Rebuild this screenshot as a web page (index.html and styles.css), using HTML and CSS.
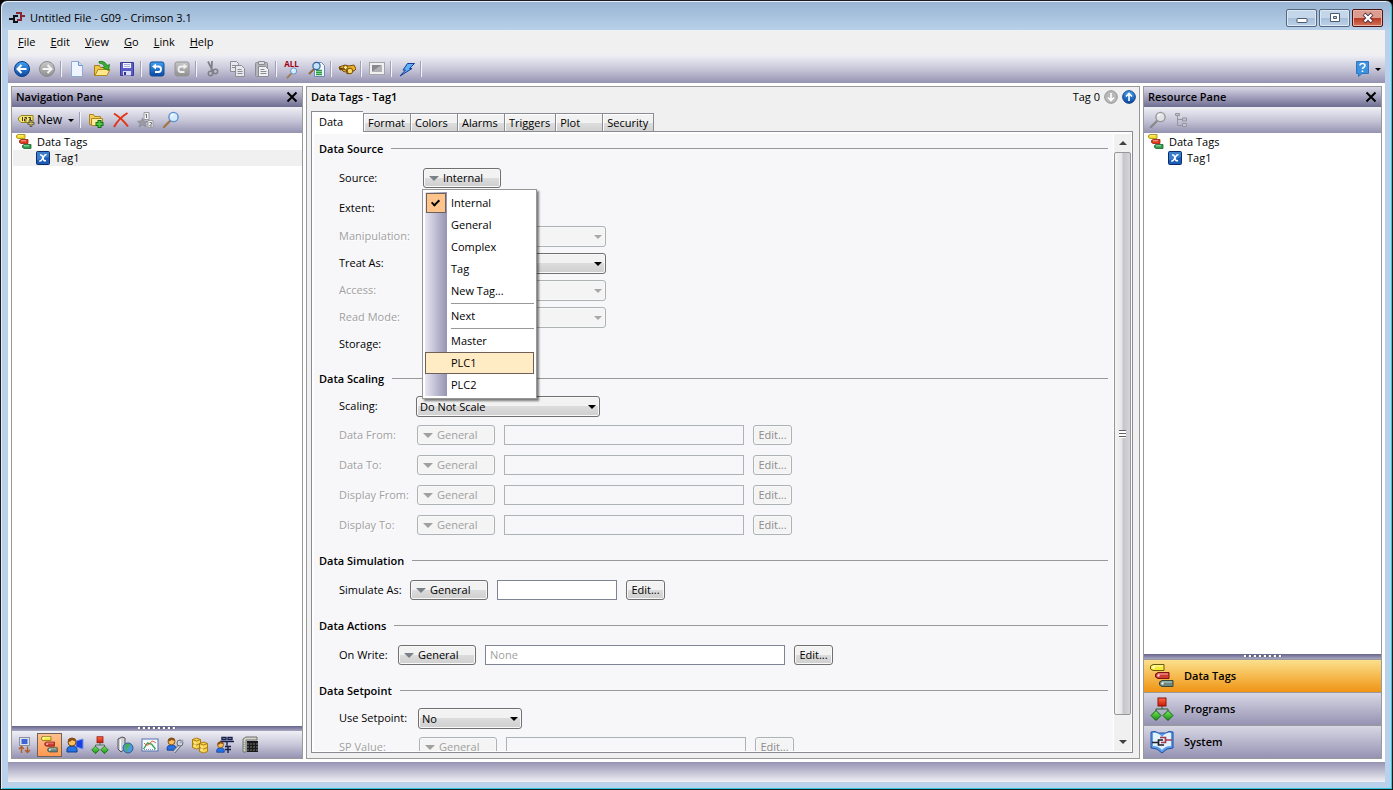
FILE: index.html
```
<!DOCTYPE html>
<html lang="en">
<head>
    <meta charset="UTF-8">
    <meta name="viewport" content="width=device-width, initial-scale=1.0">
    <title>Untitled File - G09 - Crimson 3.1</title>
    <link rel="stylesheet" href="styles.css">
</head>
<body>
    <!-- shared icons -->
    <svg class="sprite" aria-hidden="true">
        <defs>
            <linearGradient id="blue" x1="0" y1="0" x2="0" y2="1"><stop offset="0" stop-color="#3fa2f4"/><stop offset="1" stop-color="#0d47a0"/></linearGradient>
            <linearGradient id="grey" x1="0" y1="0" x2="0" y2="1"><stop offset="0" stop-color="#c9c9c9"/><stop offset="1" stop-color="#8e8e8e"/></linearGradient>
            <linearGradient id="gold" x1="0" y1="0" x2="0" y2="1"><stop offset="0" stop-color="#fff3a0"/><stop offset="1" stop-color="#e0a820"/></linearGradient>
            <linearGradient id="red" x1="0" y1="0" x2="0" y2="1"><stop offset="0" stop-color="#ff6a40"/><stop offset="1" stop-color="#c81808"/></linearGradient>
            <linearGradient id="green" x1="0" y1="0" x2="0" y2="1"><stop offset="0" stop-color="#7ae860"/><stop offset="1" stop-color="#189010"/></linearGradient>
        </defs>
        <symbol id="i-tags" viewBox="0 0 24 24">
            <path d="M3 .500h11v6H3L.500 5V2z" fill="#f4e838" stroke="#6b5c10"/>
            <path d="M3 2h10" stroke="#fffcc8"/>
            <path d="M8 8.500h11v6H8L5.500 13v-3z" fill="#cf3a34" stroke="#7a1510"/>
            <path d="M8 10h10" stroke="#ffa898"/>
            <path d="M12 16.500h11v6H12L9.500 21v-3z" fill="#6c8880" stroke="#34483f"/>
            <path d="M12 18h10" stroke="#c0d4cc"/>
            <path d="M2.500 3.500h2M7.500 11.500h2M11.500 19.500h2" stroke="#fff" stroke-width="2"/>
        </symbol>
        <symbol id="i-tags-small" viewBox="0 0 16 16">
            <path d="M2 .500h7v4H2L.500 3.500v-2z" fill="#f8dc20" stroke="#a08410" stroke-width=".8"/>
            <path d="M5 5.500h7v4H5L3.500 8.500v-2z" fill="#e03a18" stroke="#982010" stroke-width=".8"/>
            <path d="M8 10.500h7v4H8l-1.500-1v-2z" fill="#2ea04c" stroke="#1c6430" stroke-width=".8"/>
            <path d="M2 1.800h5M5 6.800h5M8 11.800h5" stroke="#fff" stroke-opacity=".6"/>
        </symbol>
        <symbol id="i-xtag" viewBox="0 0 14 14">
            <rect x=".500" y=".500" width="13" height="13" rx="1" fill="#1d5cb4" stroke="#0c2c6c"/>
            <path d="M1 1h12v5L1 9z" fill="#5aa0e4" opacity=".5"/>
            <path d="M4 4q2-.5 2.500 1.500l1 3q.500 2 2.500 1M10.500 3.800q-1.500-.6-3 2l-1.200 2.200q-1.500 2.500-3 1.800" fill="none" stroke="#fff" stroke-width="1.500"/>
        </symbol>
        <symbol id="i-programs" viewBox="0 0 24 24">
            <path d="M12 9v3M6 16v-4h12v4" fill="none" stroke="#2c5c38"/>
            <rect x="8" y="1" width="8" height="8" fill="url(#red)" stroke="#8c1408"/>
            <path d="M6 13.500l5 5-5 5-5-5zM18 13.500l5 5-5 5-5-5z" fill="url(#green)" stroke="#0c6410"/>
        </symbol>
        <symbol id="i-search" viewBox="0 0 18 18">
            <path d="M8 10l-6 6" stroke="#a07848" stroke-width="2.400" stroke-linecap="round"/>
            <circle cx="11.500" cy="6" r="4.600" fill="#d4ecff" stroke="#5f8fcc" stroke-width="1.400"/>
            <path d="M9 5.500q.500-2 2.500-2" fill="none" stroke="#fff" stroke-width="1.300"/>
        </symbol>
        <symbol id="i-close" viewBox="0 0 12 12"><path d="M1.500 1.500l9 9M10.500 1.500l-9 9" stroke="#000" stroke-width="2"/></symbol>
        <symbol id="i-person" viewBox="0 0 12 16">
            <path d="M1 15q-1-6 5-6t5 6z" fill="#2472e4" stroke="#103c90"/>
            <circle cx="6" cy="5" r="4" fill="#f8c060" stroke="#784810"/>
            <path d="M2 5q0-4 4-4t4 3q-3 0-4-1-1 2-4 2z" fill="#8a4a14"/>
        </symbol>
    </svg>

    <div class="window">
        <header class="titlebar">
            <svg class="app-icon" width="17" height="14" viewBox="0 0 17 14" fill="none" stroke-width="2">
                <path d="M0 8h5M9 5H5v6h4" stroke="#101010"/>
                <path d="M7 2h5v7H8M12 5h4" stroke="#8c2434"/>
            </svg>
            <h1 class="window-title">Untitled File - G09 - Crimson 3.1</h1>
            <div class="window-buttons">
                <button class="win-btn" aria-label="Minimize"><svg width="12" height="12" viewBox="0 0 12 12"><rect x="1" y="6.500" width="10" height="4" rx=".5" fill="#fff" stroke="#4c5a70"/></svg></button>
                <button class="win-btn" aria-label="Maximize"><svg width="12" height="12" viewBox="0 0 12 12"><path d="M1.500 1.500h9v8h-9zM4.500 4.500v2h3v-2z" fill="#fff" fill-rule="evenodd" stroke="#4c5a70"/></svg></button>
                <button class="win-btn win-close" aria-label="Close"><svg width="12" height="12" viewBox="0 0 12 12"><path d="M2 2l8 8M10 2l-8 8" stroke="#503040" stroke-width="4"/><path d="M2.500 2.500l7 7M9.500 2.500l-7 7" stroke="#fff" stroke-width="2.400"/></svg></button>
            </div>
        </header>

        <div class="client">
            <nav class="menubar">
                <a href="#"><u>F</u>ile</a>
                <a href="#"><u>E</u>dit</a>
                <a href="#"><u>V</u>iew</a>
                <a href="#"><u>G</u>o</a>
                <a href="#"><u>L</u>ink</a>
                <a href="#"><u>H</u>elp</a>
            </nav>

            <div class="toolbar main-toolbar">
                <button class="tool" aria-label="Back"><svg width="18" height="18" viewBox="0 0 18 18"><circle cx="9" cy="9" r="7.500" fill="url(#blue)" stroke="#0c3c84"/><path d="M13.500 9H5M8.500 5L4.500 9l4 4" fill="none" stroke="#fff" stroke-width="2"/></svg></button>
                <button class="tool" aria-label="Forward"><svg width="18" height="18" viewBox="0 0 18 18"><circle cx="9" cy="9" r="7.500" fill="url(#grey)" stroke="#8c8c8c"/><path d="M4.500 9H13M9.500 5l4 4-4 4" fill="none" stroke="#f4f4f4" stroke-width="2"/></svg></button>
                <span class="sep"></span>
                <button class="tool" aria-label="New"><svg width="18" height="18" viewBox="0 0 18 18"><path d="M3.500 1.500h7l4 4v11h-11z" fill="#eef5ff" stroke="#8caad4"/><path d="M10.500 1.500v4h4" fill="#c4dcf8" stroke="#6c94cc"/></svg></button>
                <button class="tool" aria-label="Open"><svg width="18" height="18" viewBox="0 0 18 18"><path d="M1.500 15.500V5.500h5l1 2h6v8z" fill="#f0c848" stroke="#a87c18"/><path d="M2 15.500l3-6h12l-3 6z" fill="#ffe88c" stroke="#b08820"/><path d="M6 1.500q6-1 8 4l2.500-1-1 6L9.500 7.500l2-.8Q10 3 6 3z" fill="#38b030" stroke="#187018" stroke-width=".7"/></svg></button>
                <button class="tool" aria-label="Save"><svg width="18" height="18" viewBox="0 0 18 18"><path d="M2.500 2.500h13v13h-13z" fill="#5a5cc8" stroke="#3c3c98"/><path d="M5 3h8v5H5z" fill="#f4f6ff"/><path d="M6 4.500h6M6 6.500h6" stroke="#a8acdc"/><path d="M5 11h8v4.500H5z" fill="#dcdff4"/><path d="M6 12h2v3H6z" fill="#34348c"/></svg></button>
                <span class="sep"></span>
                <button class="tool" aria-label="Undo"><svg width="18" height="18" viewBox="0 0 18 18"><rect x="2" y="2" width="14" height="14" rx="2" fill="url(#blue)" stroke="#104c98"/><path d="M6 6.500h4.500q2.500 0 2.500 2.700T10.500 12H7" fill="none" stroke="#fff" stroke-width="1.800"/><path d="M8 3.500L4 6.500l4 3z" fill="#fff"/></svg></button>
                <button class="tool" aria-label="Redo"><svg width="18" height="18" viewBox="0 0 18 18"><rect x="2" y="2" width="14" height="14" rx="2" fill="url(#grey)" stroke="#949494"/><path d="M12 6.500H8q-2.500 0-2.500 2.700T8 12h3.500" fill="none" stroke="#f0f0f0" stroke-width="1.800"/><path d="M10.500 3.500l4 3-4 3z" fill="#f0f0f0"/></svg></button>
                <span class="sep"></span>
                <button class="tool" aria-label="Cut"><svg width="18" height="18" viewBox="0 0 18 18" fill="none" stroke="#808088"><path d="M5 1.500l5 10M9 1l-.5 10" stroke-width="1.800"/><circle cx="7.500" cy="13.500" r="2.200" stroke-width="1.500"/><circle cx="12.500" cy="11.500" r="2.200" stroke-width="1.500"/></svg></button>
                <button class="tool" aria-label="Copy"><svg width="18" height="18" viewBox="0 0 18 18" fill="#e8e8ec" stroke="#8c8c94"><path d="M2.500 1.500h6l2 2v8h-8z"/><path d="M4 5.500h4M4 7.500h4"/><path d="M7.500 5.500h6l3 3v8h-9z"/><path d="M9.500 9.500h4M9.500 11.500h5M9.500 13.500h5"/></svg></button>
                <button class="tool" aria-label="Paste"><svg width="18" height="18" viewBox="0 0 18 18" stroke="#8c8c94"><rect x="2.500" y="2.500" width="12" height="14" rx="1" fill="#b4b4ba"/><path d="M5.500 1.500h6v3h-6z" fill="#dedee2"/><path d="M5.500 6.500h7l3 3v7h-10z" fill="#f0f0f2"/><path d="M7.500 9.500h4M7.500 11.500h6M7.500 13.500h6"/></svg></button>
                <span class="sep"></span>
                <button class="tool find-all" aria-label="Find all"><span class="all-text">ALL</span><svg width="12" height="12" viewBox="0 0 18 18"><use href="#i-search"/></svg></button>
                <button class="tool" aria-label="Find in document"><svg width="18" height="18" viewBox="0 0 18 18"><path d="M6.500 2.500h7l3 3v11h-10z" fill="#f0f5ff" stroke="#6c88b8"/><path d="M8 10.500h6M8 12.500h6M8 14.500h6" stroke="#28a038" stroke-width="1.300"/><path d="M6 9l-5 5" stroke="#8c6840" stroke-width="2"/><circle cx="8.500" cy="6" r="3.600" fill="#c4e4fc" stroke="#34649c" stroke-width="1.200"/></svg></button>
                <span class="sep"></span>
                <button class="tool" aria-label="Browse"><svg width="18" height="18" viewBox="0 0 18 18" stroke="#7c5008"><path d="M1 7l6-2 4 1 5-1 2 4-2 2h-3l-2 3-3-1 1-3-3 2z" fill="#ecb028"/><circle cx="12" cy="11" r="2.800" fill="#f8d868"/><circle cx="7.500" cy="7.500" r="2" fill="#fff0a0"/><path d="M1 7l1 3 5-1" fill="#604008"/></svg></button>
                <span class="sep"></span>
                <button class="tool" aria-label="Display"><svg width="18" height="18" viewBox="0 0 18 18"><rect x="1.500" y="2.500" width="15" height="12" fill="#f0f0f0" stroke="#a4a4a8"/><path d="M4 12V5h10z" fill="#888890"/><path d="M4 12h10V5z" fill="#b0b0b4"/></svg></button>
                <span class="sep"></span>
                <button class="tool" aria-label="Download"><svg width="18" height="18" viewBox="0 0 18 18"><path d="M9.500 3.500h7l-5 5h2.500L2 16l5.500-6H5z" fill="#5cb0f8" stroke="#143c98"/></svg></button>
                <span class="sep"></span>
                <button class="tool tool-help" aria-label="Help"><svg width="18" height="18" viewBox="0 0 18 18"><path d="M2.500 1.500h12v12H8l-3.500 3v-3h-2z" fill="#3c92dc" stroke="#2c74c4"/><path d="M6 5.500q0-2 2.500-2t2.500 2q0 1.200-1.500 2-1 .5-1 1.500M8.500 10.500v1.500" fill="none" stroke="#fff" stroke-width="1.600"/></svg><i class="caret"></i></button>
            </div>

            <main class="workspace">
                <section class="pane nav-pane">
                    <div class="pane-head"><h2>Navigation Pane</h2><button class="close" aria-label="Close navigation pane"><svg width="12" height="12"><use href="#i-close"/></svg></button></div>
                    <div class="toolbar pane-toolbar">
                        <button class="tool-new"><svg width="17" height="16" viewBox="0 0 17 16"><path d="M3 3.500h12v7H3L.500 8V6z" fill="#f4e478" stroke="#94801c"/><path d="M4.500 5v4M6.500 5.500h2v1.500h-2v2h2M10.500 5.500h2V9h-2M11 7.200h1.500" fill="none" stroke="#403808"/><path d="M13 8v7M9.500 11.500h7" stroke="#54544c" stroke-width="2.600"/><path d="M13 9v5M10.500 11.500h5" stroke="#d8c850"/></svg>New<i class="caret"></i></button>
                        <span class="sep"></span>
                        <button class="tool" aria-label="New folder"><svg width="18" height="18" viewBox="0 0 18 18"><path d="M2.500 13.500v-10h4l1 2h6v8z" fill="#f4d058" stroke="#b08420"/><path d="M4.500 14.500v-7h11v7z" fill="#ffec9c" stroke="#b08420"/><path d="M12.500 9v8M8.500 13h8" stroke="#186c18" stroke-width="4"/><path d="M12.500 10v6M9.500 13h6" stroke="#4ccc3c" stroke-width="2"/></svg></button>
                        <button class="tool" aria-label="Delete"><svg width="18" height="18" viewBox="0 0 18 18"><path d="M2 2.500q8 5 14 13M15.500 2Q7 7 2 16" fill="none" stroke="#e43414" stroke-width="2"/></svg></button>
                        <button class="tool" aria-label="Sort"><svg width="18" height="18" viewBox="0 0 18 18"><path d="M7 1.500h5v7H7zM11 9.500h5v7h-5z" fill="#f4f4f4" stroke="#9c9ca4"/><path d="M8.500 4l1-1v4M12.500 11.500h2v1.500l-2 2h2.500" fill="none" stroke="#707078"/><path d="M5.500 7l1.500 3 3.500.3L8 12.500l1 3.500-3.500-2L2 16l1-3.500L.500 10.300 4 10z" fill="#9a9aa2" stroke="#84848c" stroke-width=".6"/></svg></button>
                        <button class="tool" aria-label="Find"><svg width="18" height="18"><use href="#i-search"/></svg></button>
                    </div>
                    <ul class="tree">
                        <li><svg width="16" height="16"><use href="#i-tags-small"/></svg>Data Tags</li>
                        <li class="child selected"><svg width="14" height="14"><use href="#i-xtag"/></svg>Tag1</li>
                    </ul>
                    <div class="splitter"></div>
                    <div class="toolbar category-bar">
                        <button class="tool" aria-label="Communications"><svg width="16" height="18" viewBox="0 0 16 18"><rect x="2.500" y="1.500" width="10" height="8" fill="#e0e0e8" stroke="#8890a4"/><rect x="4.500" y="3" width="6" height="5" fill="#3c64d8"/><path d="M4.500 17v-6M2 13l2.500-2.500L7 13M10.500 10.500v6M8 14l2.500 2.500L13 14" fill="none" stroke="#b45c28" stroke-width="1.400"/></svg></button>
                        <button class="tool active" aria-label="Data Tags"><svg width="17" height="17"><use href="#i-tags"/></svg></button>
                        <button class="tool" aria-label="Displays"><svg width="18" height="16" viewBox="0 0 18 16"><path d="M10 4l7-2v10l-7-2z" fill="#1840e0" stroke="#7090f0"/><use href="#i-person" width="12" height="16"/></svg></button>
                        <button class="tool" aria-label="Programs"><svg width="18" height="18"><use href="#i-programs"/></svg></button>
                        <button class="tool" aria-label="Web Server"><svg width="18" height="18" viewBox="0 0 18 18"><path d="M2 3l4-2 3 1v11l-4 3-3-3z" fill="#d0d0d4" stroke="#505058"/><path d="M4.500 3.500V14" stroke="#fff"/><circle cx="12" cy="12" r="5" fill="#4c9cdc" stroke="#285c94"/><path d="M9 10q2-3 5-2l-1 3-2 1 1 4q-3-2-3-6z" fill="#48b048"/></svg></button>
                        <button class="tool" aria-label="Data Logger"><svg width="18" height="16" viewBox="0 0 18 16"><rect x="1" y="2" width="16" height="12" fill="#f4f8ff" stroke="#5474ac"/><path d="M2.500 12l4-6 4 1 4 5" fill="none" stroke="#30a040" stroke-width="1.300"/><path d="M3 6q2 3 4 2t3-3 5 1" fill="none" stroke="#e06040"/><path d="M3 12.500h12" stroke="#8098c0" stroke-dasharray="1 1"/></svg></button>
                        <button class="tool" aria-label="Security"><svg width="18" height="16" viewBox="0 0 18 16"><use href="#i-person" width="11" height="14"/><path d="M8 15l6-7" stroke="#606874" stroke-width="3.400"/><path d="M8 15l6-7" stroke="#c8d0dc" stroke-width="1.800"/><circle cx="14" cy="6" r="3" fill="#d0d8e4" stroke="#606874"/><path d="M14 6l3-3" stroke="#a8a6c0" stroke-width="2"/></svg></button>
                        <button class="tool" aria-label="SQL"><svg width="18" height="18" viewBox="0 0 18 18" fill="#f8d450" stroke="#a87c14"><path d="M1.500 3.500v8q4 3 8 0v-8q-4-3-8 0z"/><path d="M1.500 3.500q4 3 8 0M1.500 7.500q4 3 8 0" fill="none"/><path d="M8.500 7.500v8q4 3 8 0v-8q-4-3-8 0z"/><path d="M8.500 7.500q4 3 8 0M8.500 11.500q4 3 8 0" fill="none"/><path d="M4 6v5M11 10v5" stroke="#fff8c0"/></svg></button>
                        <button class="tool" aria-label="Control"><svg width="18" height="18" viewBox="0 0 18 18"><path d="M6 1.500h4v2H6zM12 1.500h4v2h-4zM4 5.500h14M11 5.500v4M9 10.500h6M9 13.500h6M12 10v7" fill="none" stroke="#14204c" stroke-width="1.400"/><use href="#i-person" x="0" y="5" width="9" height="12"/></svg></button>
                        <button class="tool" aria-label="Devices"><svg width="18" height="18" viewBox="0 0 18 18"><path d="M2 3l3-2h11v3H5v12H2z" fill="#d4d4cc" stroke="#707068"/><path d="M6 5h11v11H6z" fill="#181818"/><path d="M6 8h11M6 11h11M6 14h11" stroke="#7c7c7c" stroke-dasharray="2 1"/><path d="M3 6v8" stroke="#5c8c5c" stroke-dasharray="1 1"/></svg></button>
                    </div>
                </section>

                <section class="pane editor">
                    <div class="editor-head">
                        <h2>Data Tags - Tag1</h2>
                        <span class="tag-index">Tag 0</span>
                        <button class="step" aria-label="Next tag"><svg width="14" height="14" viewBox="0 0 14 14"><circle cx="7" cy="7" r="6.300" fill="#b8b8b8" stroke="#949494"/><path d="M7 3v7M4 7.500l3 3 3-3" fill="none" stroke="#fff" stroke-width="1.600"/></svg></button>
                        <button class="step" aria-label="Previous tag"><svg width="14" height="14" viewBox="0 0 14 14"><circle cx="7" cy="7" r="6.300" fill="url(#blue)" stroke="#0c3c84"/><path d="M7 11V4M4 6.500l3-3 3 3" fill="none" stroke="#fff" stroke-width="1.600"/></svg></button>
                    </div>
                    <div class="tabs">
                        <button class="tab current">Data</button>
                        <button class="tab">Format</button>
                        <button class="tab">Colors</button>
                        <button class="tab">Alarms</button>
                        <button class="tab">Triggers</button>
                        <button class="tab">Plot</button>
                        <button class="tab">Security</button>
                    </div>
                    <div class="sheet">
                        <form class="fields">
                            <fieldset class="group source">
                                <h3>Data Source</h3>
                                <div class="row tall">
                                    <label for="source">Source:</label>
                                    <div class="menu-anchor">
                                        <button type="button" class="picker" id="source"><i class="tri"></i>Internal</button>
                                        <ul class="menu">
                                            <li class="checked">Internal</li>
                                            <li>General</li>
                                            <li>Complex</li>
                                            <li>Tag</li>
                                            <li>New Tag...</li>
                                            <li class="divider"></li>
                                            <li>Next</li>
                                            <li class="divider"></li>
                                            <li>Master</li>
                                            <li class="hover">PLC1</li>
                                            <li>PLC2</li>
                                        </ul>
                                    </div>
                                </div>
                                <div class="row tall"><span class="label">Extent:</span></div>
                                <div class="row off"><label for="manip">Manipulation:</label><span class="select"><select id="manip" disabled><option></option></select></span></div>
                                <div class="row"><label for="treat">Treat As:</label><span class="select"><select id="treat"><option></option></select></span></div>
                                <div class="row off"><label for="access">Access:</label><span class="select"><select id="access" disabled><option></option></select></span></div>
                                <div class="row off"><label for="read">Read Mode:</label><span class="select"><select id="read" disabled><option></option></select></span></div>
                                <div class="row"><span class="label">Storage:</span></div>
                            </fieldset>

                            <fieldset class="group scaling">
                                <h3>Data Scaling</h3>
                                <div class="row"><label for="scale">Scaling:</label><span class="select"><select id="scale"><option>Do Not Scale</option></select></span></div>
                                <div class="row tall off"><label for="data-from">Data From:</label><button type="button" class="picker" disabled><i class="tri"></i>General</button><input type="text" id="data-from" class="box" disabled><button type="button" class="edit" disabled>Edit...</button></div>
                                <div class="row tall off"><label for="data-to">Data To:</label><button type="button" class="picker" disabled><i class="tri"></i>General</button><input type="text" id="data-to" class="box" disabled><button type="button" class="edit" disabled>Edit...</button></div>
                                <div class="row tall off"><label for="disp-from">Display From:</label><button type="button" class="picker" disabled><i class="tri"></i>General</button><input type="text" id="disp-from" class="box" disabled><button type="button" class="edit" disabled>Edit...</button></div>
                                <div class="row tall off"><label for="disp-to">Display To:</label><button type="button" class="picker" disabled><i class="tri"></i>General</button><input type="text" id="disp-to" class="box" disabled><button type="button" class="edit" disabled>Edit...</button></div>
                            </fieldset>

                            <fieldset class="group simulation">
                                <h3>Data Simulation</h3>
                                <div class="row tall"><label for="simulate">Simulate As:</label><button type="button" class="picker"><i class="tri"></i>General</button><input type="text" id="simulate" class="box short"><button type="button" class="edit">Edit...</button></div>
                            </fieldset>

                            <fieldset class="group actions">
                                <h3>Data Actions</h3>
                                <div class="row tall"><label for="on-write">On Write:</label><button type="button" class="picker"><i class="tri"></i>General</button><input type="text" id="on-write" class="box long" placeholder="None"><button type="button" class="edit">Edit...</button></div>
                            </fieldset>

                            <fieldset class="group setpoint">
                                <h3>Data Setpoint</h3>
                                <div class="row"><label for="use-sp">Use Setpoint:</label><span class="select narrow"><select id="use-sp"><option>No</option></select></span></div>
                                <div class="row tall off"><label for="sp-value">SP Value:</label><button type="button" class="picker" disabled><i class="tri"></i>General</button><input type="text" id="sp-value" class="box" disabled><button type="button" class="edit" disabled>Edit...</button></div>
                            </fieldset>
                        </form>
                        <div class="scrollbar">
                            <button class="scroll-btn up" aria-label="Scroll up"></button>
                            <div class="thumb"><span class="grip"></span></div>
                            <button class="scroll-btn down" aria-label="Scroll down"></button>
                        </div>
                    </div>
                </section>

                <section class="pane resource-pane">
                    <div class="pane-head"><h2>Resource Pane</h2><button class="close" aria-label="Close resource pane"><svg width="12" height="12"><use href="#i-close"/></svg></button></div>
                    <div class="toolbar pane-toolbar">
                        <button class="tool" aria-label="Find" disabled><svg class="greyed" width="18" height="18"><use href="#i-search"/></svg></button>
                        <button class="tool" aria-label="Expand" disabled><svg width="18" height="16" viewBox="0 0 18 16" fill="#c4c4cc" stroke="#94949c"><path d="M3.500 3v10.500H8M3.500 7.500H8" fill="none"/><path d="M1.500 1.500h4v2h-4zM8.500 6h4v3h-4zM8.500 11.500h4v3h-4z"/></svg></button>
                    </div>
                    <ul class="tree">
                        <li><svg width="16" height="16"><use href="#i-tags-small"/></svg>Data Tags</li>
                        <li class="child"><svg width="14" height="14"><use href="#i-xtag"/></svg>Tag1</li>
                    </ul>
                    <div class="splitter"></div>
                    <button class="category active"><svg width="24" height="24"><use href="#i-tags"/></svg>Data Tags</button>
                    <button class="category"><svg width="24" height="24"><use href="#i-programs"/></svg>Programs</button>
                    <button class="category"><svg width="24" height="24" viewBox="0 0 24 24"><path d="M1 2q5-1.500 7 1h8q2-2.500 7-1v16l-6 1-5 4-5-4-6-1z" fill="#5c9ce8" stroke="#1c4ca8"/><path d="M3 3q5-1 9 4 4-5 9-4v13q-6 0-9 4-3-4-9-4z" fill="#e4f1ff"/><path d="M2 12.500h6M13 10H8.500v5H14" fill="none" stroke="#202028" stroke-width="1.700"/><path d="M10 7.500h5.500v5H11M15.500 10H22" fill="none" stroke="#a83848" stroke-width="1.700"/></svg>System</button>
                </section>
            </main>

            <footer class="statusbar"></footer>
        </div>
    </div>
</body>
</html>
```
FILE: styles.css
```
*, *::before, *::after {
    box-sizing: border-box;
}

body {
    margin: 0;
    background: #000;
    color: #000;
    font-family: "Open Sans", "Noto Sans", sans-serif;
    font-size: 11px;
    line-height: 16px;
}

button, input, select {
    font: inherit;
    color: inherit;
    margin: 0;
    padding: 0;
}

button {
    border: 0;
    background: none;
}

h1, h2, h3, ul, fieldset {
    margin: 0;
    padding: 0;
    border: 0;
    font-size: 11px;
}

h2, h3 {
    font-weight: 600;
}

ul {
    list-style: none;
}

svg {
    display: block;
    flex: none;
}

.sprite {
    position: absolute;
    width: 0;
    height: 0;
}

/* window frame */
.window {
    display: flex;
    flex-direction: column;
    height: 100vh;
    padding: 0 6px 7px;
    border: 1px solid #1c1c1c;
    border-radius: 7px 7px 0 0;
    background: linear-gradient(#98b4d2, #b9d1ea 30px);
    box-shadow: inset 1px 1px #e4eefa, inset -1px -1px #2cc8e0;
}

.titlebar {
    display: flex;
    flex: none;
    align-items: center;
    height: 29px;
    padding: 5px 3px 0 2px;
}

.window-title {
    margin-left: 4px;
    font-size: 11px;
    font-weight: normal;
}

.window-buttons {
    display: flex;
    gap: 2px;
    margin-left: auto;
}

.win-btn {
    display: flex;
    align-items: center;
    justify-content: center;
    width: 31px;
    height: 18px;
    border: 1px solid #56687e;
    border-radius: 2px;
    background: linear-gradient(#c4d6ea 50%, #a6bed8 50%, #bcd2ea);
    box-shadow: inset 0 0 0 1px #dce8f4;
}

.win-close {
    border-color: #4c1414;
    background: linear-gradient(#dc9c90 50%, #b83820 50%, #d4745c);
    box-shadow: inset 0 0 0 1px #e8b4a8;
}

.client {
    display: flex;
    flex: 1;
    flex-direction: column;
    min-height: 0;
    margin: 0 1px;
    background: #fff;
}

.menubar {
    display: flex;
    flex: none;
    align-items: center;
    gap: 15px;
    height: 25px;
    padding: 0 10px 1px;
    background: #f0f0f0;
}

.menubar a {
    color: #000;
    text-decoration: none;
}

/* toolbars */
.toolbar {
    display: flex;
    flex: none;
    align-items: center;
    background: linear-gradient(#efeff5, #c8c7d9 50%, #9593b2);
}

.main-toolbar {
    height: 28px;
    padding: 0 5px 0 1px;
}

.tool {
    display: flex;
    align-items: center;
    justify-content: center;
    width: 25px;
    height: 24px;
}

.sep {
    width: 1px;
    height: 16px;
    margin: 0 2px;
    background: #f4f4f8;
    box-shadow: -1px 0 #a09eb8;
}

.caret {
    width: 0;
    border: 3px solid transparent;
    border-top-color: #000;
    border-bottom: 0;
}

.find-all {
    flex-direction: column;
}

.all-text {
    color: #a00010;
    font-size: 8px;
    font-weight: bold;
    line-height: 7px;
}

.tool-help {
    gap: 3px;
    margin-left: auto;
}

/* panes */
.workspace {
    display: flex;
    flex: 1;
    gap: 3px;
    min-height: 0;
    padding: 3px;
}

.pane {
    display: flex;
    flex-direction: column;
    min-height: 0;
    border: 1px solid #999;
    background: #fff;
}

.nav-pane {
    width: 292px;
}

.resource-pane {
    width: 239px;
}

.pane-head {
    display: flex;
    align-items: center;
    justify-content: space-between;
    height: 20px;
    padding: 0 4px;
    background: linear-gradient(#d8d7e6, #a3a1bd 50%, #6f6d90);
}

.pane-toolbar {
    height: 26px;
    padding-left: 1px;
}

.tool-new {
    display: flex;
    align-items: center;
    width: 65px;
    padding-left: 5px;
    gap: 2px;
    font-size: 12px;
}

.tool-new .caret {
    margin-left: 4px;
}

.greyed {
    filter: grayscale(1);
    opacity: .8;
}

.tree {
    flex: 1;
    padding: 1px 0 0 1px;
}

.tree li {
    display: flex;
    align-items: center;
    gap: 5px;
    height: 16px;
    padding-left: 3px;
}

.tree .child {
    padding-left: 23px;
}

.tree .selected {
    background: #f0f0f0;
}

.splitter {
    display: flex;
    flex: none;
    justify-content: center;
    height: 5px;
    background: linear-gradient(#66648a, #a8a6c2);
}

.splitter::before {
    content: "";
    width: 38px;
    height: 2px;
    margin-top: 1px;
    background: repeating-linear-gradient(90deg, #fff 0 2px, #66667c 2px 4px, transparent 4px 5px);
}

.category-bar {
    height: 27px;
}

.category-bar .active {
    border: 1px solid #6c6058;
    background: linear-gradient(#ffc090, #ff9850);
}

.category {
    display: flex;
    align-items: center;
    gap: 10px;
    height: 33px;
    padding-left: 6px;
    border-top: 1px solid #999;
    background: linear-gradient(#d8d7e5, #9593b2);
    font-weight: 600;
}

.category.active {
    background: linear-gradient(#fbe08c, #f09414);
}

/* editor */
.editor {
    flex: 1;
    min-width: 0;
    padding: 0 6px 5px 4px;
    background: #f0f0f0;
}

.editor-head {
    display: flex;
    flex: none;
    align-items: center;
    gap: 4px;
    height: 20px;
    margin-right: -3px;
}

.tag-index {
    margin-left: auto;
}

.tabs {
    display: flex;
    flex: none;
    align-items: flex-end;
    height: 24px;
    padding-top: 4px;
}

.tab {
    min-width: 47px;
    height: 18px;
    padding: 0 5px 0 4px;
    border: 1px solid #898c95;
    border-width: 1px 0 0 1px;
    background: linear-gradient(#f2f2f2 50%, #dedede 50%, #d2d2d2);
    box-shadow: inset 1px 1px #fff;
    text-align: left;
}

.tab:last-child {
    border-right-width: 1px;
}

.tab.current {
    position: relative;
    z-index: 1;
    width: 52px;
    height: 21px;
    margin-bottom: -1px;
    padding: 0 7px;
    background: #fff;
}

.sheet {
    display: flex;
    flex: 1;
    min-height: 0;
    padding: 2px 1px 1px 2px;
    border: 1px solid #898c95;
    background: #fff;
}

.fields {
    flex: 1;
    min-width: 0;
    overflow: hidden;
    padding: 0 5px;
    background: #f7f7fa;
}

.group {
    margin-bottom: 6px;
}

.group h3 {
    display: flex;
    align-items: center;
    gap: 8px;
    height: 29px;
}

.group h3::after {
    content: "";
    flex: 1;
    height: 1px;
    background: #999;
}

.row {
    display: flex;
    align-items: center;
    height: 27px;
    padding-left: 20px;
}

.row.tall {
    height: 30px;
}

.row label, .label {
    flex: none;
    padding-bottom: 1px;
    white-space: nowrap;
}

.tall label, .tall .label {
    padding-bottom: 0;
}

.source label { width: 83px; }
.scaling label { width: 77px; }
.simulation label { width: 70px; }
.actions label { width: 58px; }
.setpoint label { width: 79px; }

.off label {
    color: #a0a0a0;
    text-shadow: 1px 1px #fff;
}

.picker, .edit, .select select {
    border: 1px solid #707070;
    border-radius: 3px;
    background: linear-gradient(#f2f2f2 50%, #dcdcdc 50%, #cfcfcf);
    box-shadow: inset 0 0 0 1px #f8f8f8;
}

.picker {
    display: flex;
    align-items: center;
    gap: 4px;
    width: 78px;
    height: 20px;
    margin-left: 1px;
    padding-left: 5px;
}

.tri {
    border: 5px solid transparent;
    border-top-color: #7c8088;
    border-bottom: 0;
}

.edit {
    width: 39px;
    height: 20px;
}

.picker:disabled, .edit:disabled, .select select:disabled {
    border-color: #adb2b5;
    background: #f4f4f4;
    color: #8c8c8c;
}

.picker:disabled {
    color: #a0a0a0;
}

.picker:disabled .tri {
    border-top-color: #a0a0a0;
}

.box {
    width: 240px;
    height: 20px;
    margin: 0 9px;
    padding: 0 4px 2px;
    border: 1px solid #7f8494;
    background: #fff;
}

.box.short { width: 120px; }
.box.long { width: 300px; }

.box:disabled {
    border-color: #adb2b5;
    background: #f7f7fa;
}

.box::placeholder {
    color: #a0a0a0;
    opacity: 1;
}

.select {
    position: relative;
    width: 184px;
    height: 21px;
}

.select.narrow {
    width: 104px;
}

.select select {
    display: block;
    width: 100%;
    height: 100%;
    padding-left: 3px;
    appearance: none;
    opacity: 1;
}

.select::after {
    content: "";
    position: absolute;
    top: 9px;
    right: 4px;
    border: 4px solid transparent;
    border-top-color: #000;
    border-bottom: 0;
}

.off .select::after {
    border-top-color: #a8a8a8;
}

/* popup menu */
.menu-anchor {
    position: relative;
}

.menu {
    position: absolute;
    z-index: 5;
    top: 21px;
    left: 0;
    width: 115px;
    padding: 2px;
    border: 1px solid #979797;
    background: #fff;
    box-shadow: 2px 2px 2px rgba(0, 0, 0, .5);
}

.menu li {
    position: relative;
    height: 22px;
    padding: 2px 0 2px 25px;
    border: 1px solid transparent;
    background: linear-gradient(90deg, #e8e7f2, #9593b2) no-repeat border-box 0 0 / 22px 100%;
}

.menu .divider {
    height: 3px;
    padding: 0;
    border: 0;
}

.menu .divider::after {
    content: "";
    position: absolute;
    top: 1px;
    left: 26px;
    right: 0;
    height: 1px;
    background: #999;
}

.menu .hover {
    border-color: #6c6058;
    background: #ffecc4;
}

.menu .checked::before {
    content: "";
    position: absolute;
    top: 0;
    left: 0;
    width: 20px;
    height: 20px;
    border: 1px solid #6c6058;
    background: #ffc48c;
}

.menu .checked::after {
    content: "";
    position: absolute;
    top: 5px;
    left: 7px;
    width: 5px;
    height: 8px;
    border: solid #000;
    border-width: 0 2px 2px 0;
    transform: rotate(45deg);
}

/* scrollbar */
.scrollbar {
    display: flex;
    flex-direction: column;
    width: 17px;
    margin-left: 1px;
    background: #f0f0f0;
}

.scroll-btn {
    display: flex;
    flex: none;
    align-items: center;
    justify-content: center;
    height: 18px;
}

.scroll-btn::after {
    content: "";
    border: 4px solid transparent;
}

.up::after {
    border-top: 0;
    border-bottom-color: #404040;
}

.down::after {
    border-bottom: 0;
    border-top-color: #404040;
}

.thumb {
    display: flex;
    flex: 1;
    align-items: center;
    justify-content: center;
    margin-bottom: 18px;
    border: 1px solid #979797;
    border-radius: 2px;
    background: linear-gradient(90deg, #f4f4f4, #e6e6e8 45%, #c6c6ca 55%, #d6d6da);
}

.grip {
    width: 7px;
    height: 8px;
    background: repeating-linear-gradient(#606060 0 1px, #fff 1px 3px);
}

.statusbar {
    flex: none;
    height: 20px;
    background: linear-gradient(#9593b2, #efeff5);
}
```
